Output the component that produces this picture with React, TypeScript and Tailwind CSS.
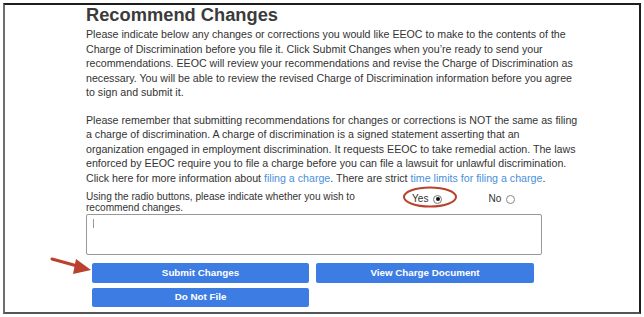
export default function App() {
  const font = { fontFamily: '"Liberation Sans", Arial, sans-serif' };
  return (
    <div className="w-[644px] h-[317px] bg-white p-[3px]" style={font}>
      <div className="relative h-[311px] bg-white border-l-2 border-l-[#6e6e6e] border-t-2 border-t-[#1e1e1e] border-r-2 border-r-[#1e1e1e] border-b-2 border-b-[#555]">
        <div className="ml-[81px] w-[460px] text-[10.65px] leading-[14.5px] text-[#333]">
          <h1 className="text-[18.3px] leading-[18px] font-bold text-[#3b3b3b] pt-[1px]">Recommend Changes</h1>
          <p className="mt-[3px] whitespace-nowrap">
            Please indicate below any changes or corrections you would like EEOC to make to the contents of the
            <br />
            Charge of Discrimination before you file it. Click Submit Changes when you’re ready to send your
            <br />
            recommendations. EEOC will review your recommendations and revise the Charge of Discrimination as
            <br />
            necessary. You will be able to review the revised Charge of Discrimination information before you agree
            <br />
            to sign and submit it.
          </p>
          <p className="mt-[13px] whitespace-nowrap">
            Please remember that submitting recommendations for changes or corrections is NOT the same as filing
            <br />
            a charge of discrimination. A charge of discrimination is a signed statement asserting that an
            <br />
            organization engaged in employment discrimination. It requests EEOC to take remedial action. The laws
            <br />
            enforced by EEOC require you to file a charge before you can file a lawsuit for unlawful discrimination.
            <br />
            Click here for more information about <span className="text-[#4a8fdc]">filing a charge</span>. There are strict{' '}
            <span className="text-[#4a8fdc]">time limits for filing a charge</span>.
          </p>
          <div className="mt-[6px] flex items-start text-[10.1px]">
            <div className="w-[326px] leading-[11px] whitespace-nowrap">
              Using the radio buttons, please indicate whether you wish to
              <br />
              recommend changes.
            </div>
            <div className="flex items-center gap-[5px] mt-[1px]">
              <span>Yes</span>
              <span className="w-[9px] h-[9px] rounded-full border border-[#777] flex items-center justify-center">
                <span className="w-[4px] h-[4px] rounded-full bg-[#111]" />
              </span>
            </div>
            <div className="flex items-center gap-[5px] mt-[1px] ml-[46px]">
              <span>No</span>
              <span className="w-[9px] h-[9px] rounded-full border border-[#888]" />
            </div>
          </div>
          <div className="mt-[1px] w-[456px] h-[41px] border border-[#999] rounded-[2px] px-[6px] pt-[4px]">
            <div className="w-px h-[9px] bg-[#999]" />
          </div>
          <div className="ml-[6px] mt-[8px] grid grid-cols-[217px_218px] gap-x-[7px] gap-y-[5px] text-white font-bold text-[9.8px]">
            <button className="h-[20px] bg-[#3d7de3] rounded-[2px]">Submit Changes</button>
            <button className="h-[20px] bg-[#3d7de3] rounded-[2px]">View Charge Document</button>
            <button className="h-[19px] bg-[#3d7de3] rounded-[2px]">Do Not File</button>
          </div>
        </div>

        <svg className="absolute left-0 top-0 pointer-events-none" width="640" height="311" viewBox="0 0 640 311">
          <ellipse cx="425" cy="192" rx="26" ry="9.5" fill="none" stroke="#b9412d" strokeWidth="2" />
          <line x1="47" y1="254" x2="76" y2="262" stroke="#b9412d" strokeWidth="3" strokeLinecap="round" />
          <polygon points="86,265 71,254 68,269" fill="#b9412d" />
        </svg>
      </div>
    </div>
  );
}
